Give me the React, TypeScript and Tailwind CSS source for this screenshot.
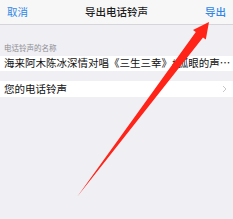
import React from 'react';

const font = { fontFamily: '"Noto Sans CJK SC", "Noto Sans", sans-serif' };

const App: React.FC = () => {
  return (
    <div className="relative w-[233px] h-[219px] overflow-hidden bg-[#efeff4]" style={font}>
      {/* Nav bar */}
      <div className="h-[25px] flex items-center justify-between px-[7px] bg-[#f7f7f7] border-b border-[#d6d6da]">
        <span className="text-[10.5px] text-[#2f86e8] leading-none">取消</span>
        <span className="text-[10.5px] text-[#1c1c1e] font-medium leading-none">导出电话铃声</span>
        <span className="text-[10.5px] text-[#2f86e8] font-medium leading-none">导出</span>
      </div>

      {/* Section header */}
      <div className="pt-[18px] pb-[3px] px-[4px] text-[7.5px] leading-[10px] text-[#8e8e93]">
        电话铃声的名称
      </div>

      {/* Name row */}
      <div className="h-[15px] bg-white px-[4px] flex items-center">
        <span className="text-[10.5px] text-[#111] leading-none whitespace-nowrap">
          海来阿木陈冰深情对唱《三生三幸》#孤眼的声…
        </span>
      </div>

      {/* Ringtone row */}
      <div className="mt-[10px] h-[16px] bg-white pl-[4px] pr-[6px] flex items-center justify-between">
        <span className="text-[10.5px] text-[#111] leading-none">您的电话铃声</span>
        <svg width="5" height="8" viewBox="0 0 5 8" fill="none">
          <path d="M1 1L4 4L1 7" stroke="#c7c7cc" strokeWidth="1" />
        </svg>
      </div>

      {/* Red annotation arrow */}
      <svg className="absolute inset-0" width="233" height="219" viewBox="0 0 233 219">
        <polygon
          points="209,22 205.8,39.6 203,37.5 77,197 195.8,32.1 193,30"
          fill="#ff2318"
        />
      </svg>
    </div>
  );
};

export default App;
